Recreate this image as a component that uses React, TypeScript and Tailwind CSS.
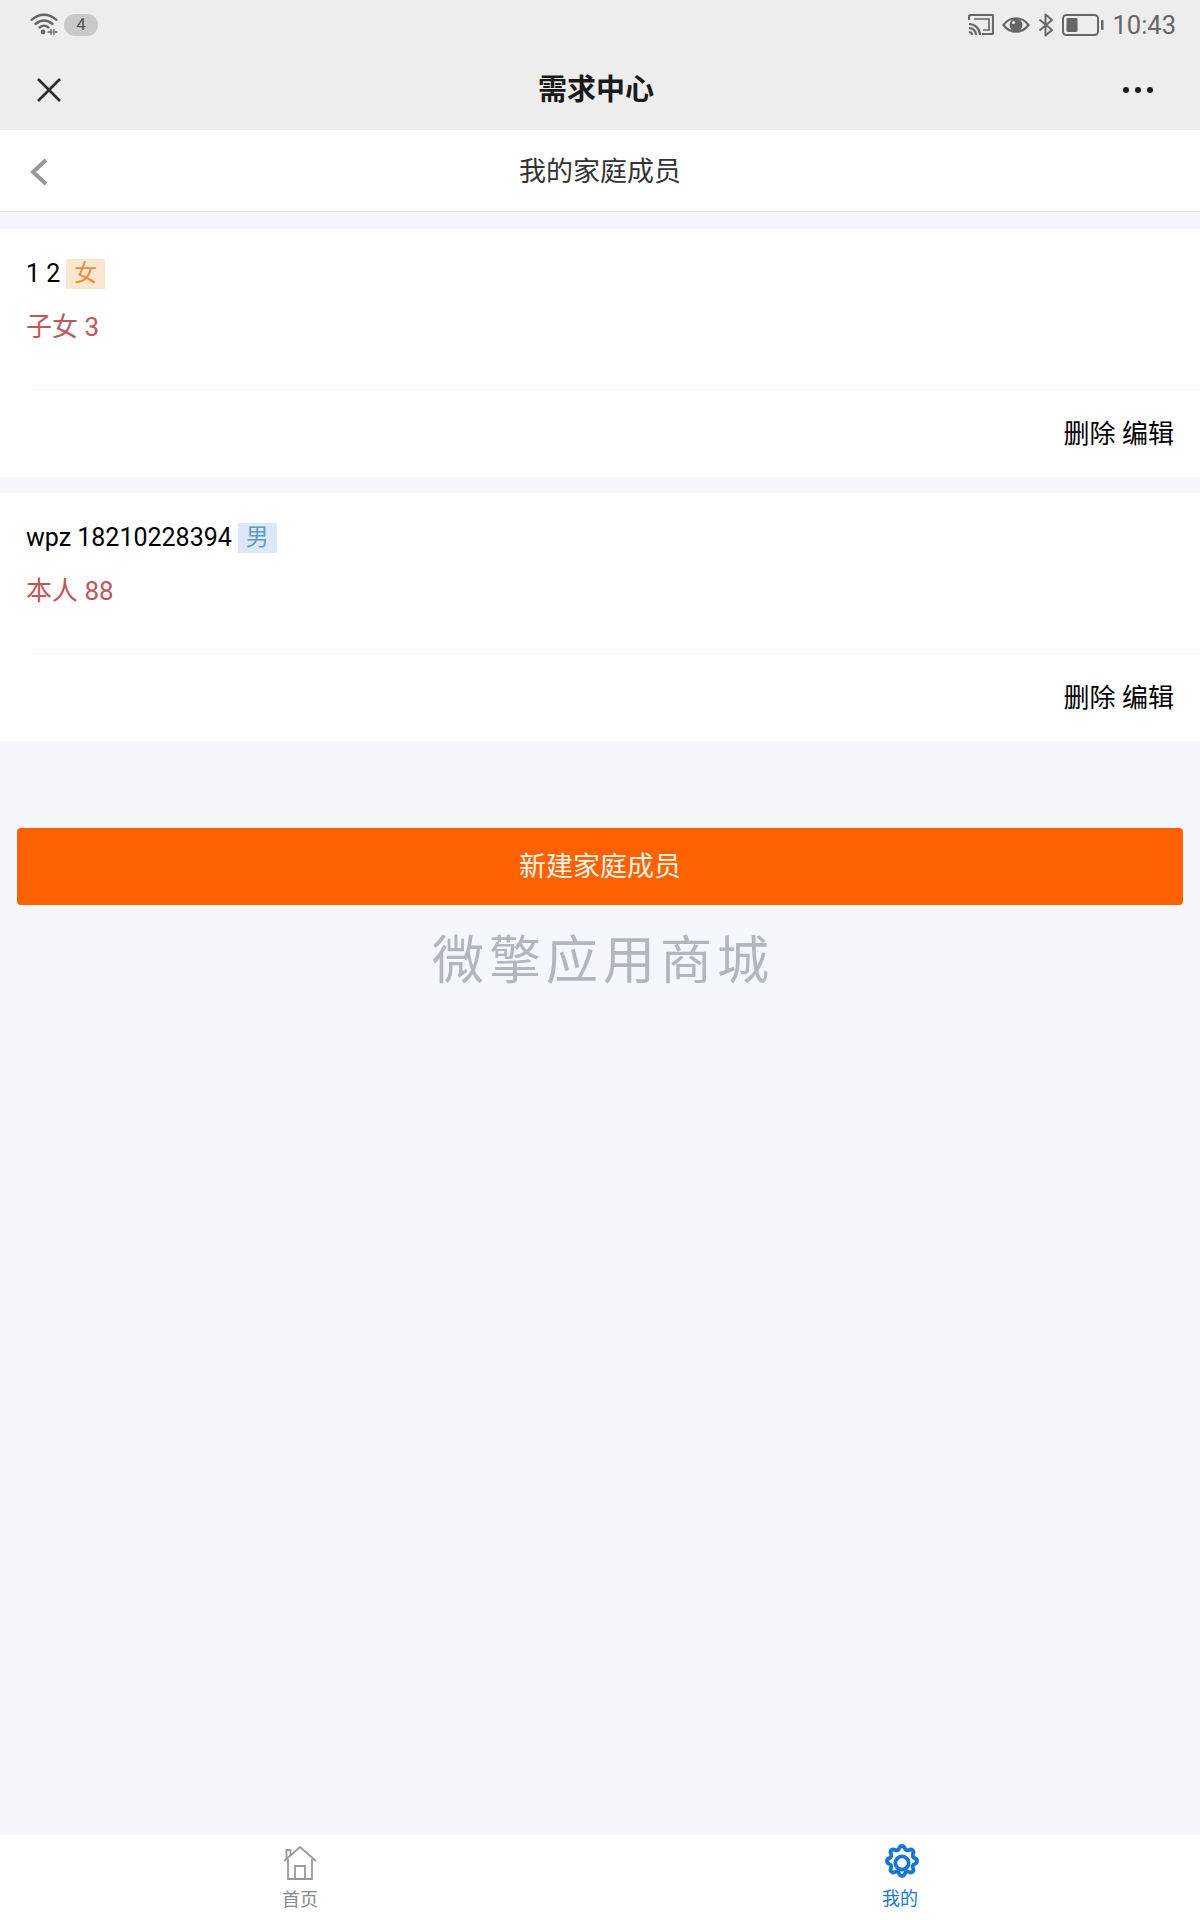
const font = { fontFamily: 'Roboto, "Noto Sans CJK SC", "Noto Sans", sans-serif' };

function Wifi() {
  return (
    <svg width="28" height="24" viewBox="0 0 28 24" fill="none" stroke="#666" strokeWidth="2.300" strokeLinecap="round">
      <path d="M1.500 7C9 0 19 0 26.500 7" />
      <path d="M5.500 11C11 6.500 17 6.500 22.500 11" />
      <path d="M9.500 14.500C12.500 12 15.500 12 18.500 14.500" />
      <circle cx="13" cy="19" r="2.4" fill="#666" stroke="none" />
      <path d="M18 19h4M21 16.500v5M24 16.500v5M24 19h3" strokeWidth="1.400" />
    </svg>
  );
}

function Cast() {
  return (
    <svg width="26" height="22" viewBox="0 0 26 22" fill="none" stroke="#666" strokeWidth="2.200">
      <path d="M1 6V2.500C1 2 1.500 1 3 1h21c.6 0 1 .5 1 1v17c0 .6-.4 1-1 1H14" />
      <path d="M6 5h15v11h-6" strokeWidth="1.700" />
      <path d="M1 10c6 0 11 5 11 11M1 14c4 0 7 3 7 7M1 18c2 0 3 1.500 3 3" />
    </svg>
  );
}

function Eye() {
  return (
    <svg width="28" height="20" viewBox="0 0 28 20">
      <path d="M1.500 10C8 1 20 1 26.500 10C20 19 8 19 1.500 10Z" fill="none" stroke="#666" strokeWidth="2.200" />
      <circle cx="14" cy="10" r="6.500" fill="#666" />
      <circle cx="11.500" cy="7.500" r="1.500" fill="#eee" />
    </svg>
  );
}

function Bluetooth() {
  return (
    <svg width="16" height="24" viewBox="0 0 16 24" fill="none" stroke="#666" strokeWidth="2" strokeLinejoin="round">
      <path d="M1.500 6.500L14 17l-6.500 5.500V1.500L14 7 1.500 17.500" />
    </svg>
  );
}

function Battery() {
  return (
    <svg width="42" height="22" viewBox="0 0 42 22">
      <rect x="1" y="1" width="35" height="20" rx="3.500" fill="none" stroke="#666" strokeWidth="2" />
      <rect x="4.500" y="4" width="11" height="14" rx="1" fill="#666" />
      <rect x="39" y="6" width="2.500" height="10" rx="1" fill="#666" />
    </svg>
  );
}

function Home() {
  return (
    <svg width="34" height="34" viewBox="0 0 34 34" fill="none" stroke="#9a9a9a" strokeWidth="1.800">
      <path d="M1 15L17 1l16 14" />
      <path d="M3.500 13V4h4v5.500" />
      <path d="M5 13v20h24V13" />
      <path d="M12 33V20h10v13" />
    </svg>
  );
}

function Gear() {
  return (
    <svg width="40" height="40" viewBox="0 0 24 24" fill="none" stroke="#1976d2" strokeWidth="2.300" strokeLinejoin="round">
      <path d="M12 1.800c1 0 1.400.6 1.700 1.400.3 1 1.500 1.500 2.500 1 .8-.4 1.500-.5 2.200.2s.6 1.400.2 2.200c-.5 1-.1 2.200 1 2.500.8.300 1.400.7 1.400 1.700s-.5 1.500-1.400 1.800c-1 .3-1.500 1.400-1 2.400.4.800.5 1.500-.2 2.200s-1.400.6-2.200.2c-1-.5-2.200-.1-2.500 1-.3.800-.7 1.400-1.700 1.400s-1.400-.6-1.700-1.400c-.3-1-1.500-1.500-2.500-1-.8.4-1.500.5-2.200-.2s-.6-1.400-.2-2.200c.5-1 0-2.100-1-2.400-.9-.3-1.400-.8-1.400-1.800s.6-1.400 1.400-1.700c1-.3 1.500-1.500 1-2.500-.4-.8-.5-1.500.2-2.200s1.400-.6 2.200-.2c1 .5 2.200 0 2.500-1 .3-.8.700-1.400 1.700-1.400Z" />
      <circle cx="12" cy="12" r="4" />
    </svg>
  );
}

function Member({ first, tag, tagCls, second }: { first: string; tag: string; tagCls: string; second: string }) {
  return (
    <section className="bg-white">
      <div className="h-[160px] pl-[26px] pt-[30px]">
        <div className="flex h-[30px] items-center text-[25px] leading-[30px] text-black">
          <span>{first}</span>
          <span className={`ml-[6px] flex h-[30px] w-[39px] items-center justify-center text-[23px] ${tagCls}`}>{tag}</span>
        </div>
        <div className="mt-[23px] text-[26px] leading-[30px] text-[#c0575a]">{second}</div>
      </div>
      <div className="ml-[32px] h-px bg-[#f4f5f6]" />
      <div className="flex h-[87px] items-center justify-end pr-[26px] pt-[1px] text-[26px] text-black">删除 编辑</div>
    </section>
  );
}

export default function App() {
  return (
    <div className="flex h-[1920px] w-[1200px] flex-col overflow-hidden bg-[#f4f7fb]" style={font}>
      <div className="h-[130px] shrink-0 bg-[#ededed]">
        <div className="flex h-[50px] items-center justify-between pl-[30px] pr-[24px]">
          <div className="flex items-center gap-[6px]">
            <Wifi />
            <span className="flex h-[22px] w-[34px] items-center justify-center rounded-full bg-[#c9c9c9] text-[17px] text-[#555]">4</span>
          </div>
          <div className="flex items-center gap-[8px]">
            <Cast />
            <Eye />
            <Bluetooth />
            <Battery />
            <span className="text-[25.5px] text-[#666]">10:43</span>
          </div>
        </div>
        <div className="relative flex h-[80px] items-center justify-between pl-[36px] pr-[46px]">
          <svg width="26" height="26" viewBox="0 0 26 26" stroke="#2b2b2b" strokeWidth="2.600">
            <path d="M2 2l22 22M24 2L2 24" />
          </svg>
          <span className="absolute left-[538px] top-[20px] text-[29px] font-bold leading-[40px] text-[#1a1a1a]">需求中心</span>
          <svg width="32" height="8" viewBox="0 0 32 8" fill="#1a1a1a">
            <circle cx="4" cy="4" r="3" />
            <circle cx="16" cy="4" r="3" />
            <circle cx="28" cy="4" r="3" />
          </svg>
        </div>
      </div>

      <div className="relative flex h-[82px] shrink-0 items-center justify-center border-b border-[#e2e3e5] bg-white pt-[3px] text-[27px] text-[#333]">
        <svg className="absolute left-[30px] top-[28px]" width="18" height="28" viewBox="0 0 18 28" fill="none" stroke="#999" strokeWidth="4">
          <path d="M16 2L3 14l13 12" />
        </svg>
        我的家庭成员
      </div>

      <div className="mt-[17px] flex flex-col gap-[16px]">
        <Member first="1 2" tag="女" tagCls="bg-[#fbe6cf] text-[#ec8a3c]" second="子女 3" />
        <Member first="wpz 18210228394" tag="男" tagCls="bg-[#dce8f8] text-[#5f9cc0]" second="本人 88" />
      </div>

      <div className="mx-[17px] mt-[87px] flex h-[77px] items-center justify-center rounded-[4px] bg-[#ff6000] pt-[1px] text-[27px] text-[#fff5e6]">
        新建家庭成员
      </div>
      <div className="mt-[19px] pl-[6px] text-center text-[52px] font-normal leading-[76px] tracking-[5px] text-[#b0b7bd]">微擎应用商城</div>

      <div className="mt-auto flex h-[85px] shrink-0 bg-white">
        <div className="flex flex-1 flex-col items-center pt-[11px] text-[18px] leading-[26px] text-[#8a8a8a]">
          <Home />
          <span className="mt-[7px]">首页</span>
        </div>
        <div className="flex flex-1 flex-col items-center pt-[8px] text-[18px] leading-[26px] text-[#1976d2]">
          <span className="pl-[3px]"><Gear /></span>
          <span className="mt-[3px]">我的</span>
        </div>
      </div>
    </div>
  );
}
